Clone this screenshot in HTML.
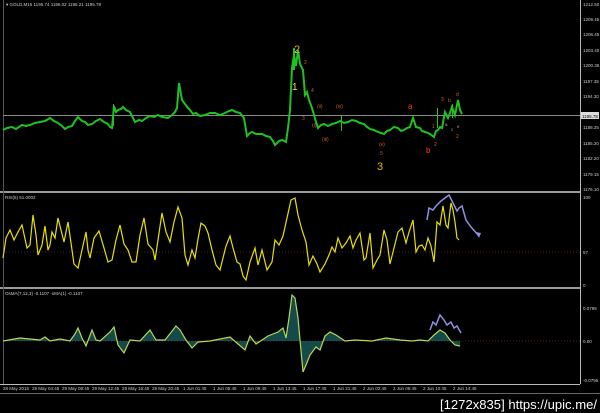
<!DOCTYPE html>
<html><head><style>
body{margin:0;background:#000;width:600px;height:413px;overflow:hidden;font-family:"Liberation Sans",sans-serif}
</style></head><body>
<svg width="600" height="413" xmlns="http://www.w3.org/2000/svg" style="position:absolute;left:0;top:0">
<rect width="600" height="413" fill="#000"/>
<line x1="0" y1="192" x2="580" y2="192" stroke="#9a9a9a" stroke-width="2"/>
<line x1="0" y1="288" x2="580" y2="288" stroke="#9a9a9a" stroke-width="2"/>
<line x1="580.5" y1="0" x2="580.5" y2="384" stroke="#bbb" stroke-width="1"/>
<line x1="3.5" y1="0" x2="3.5" y2="384" stroke="#555" stroke-width="1"/>
<line x1="0" y1="384.5" x2="580" y2="384.5" stroke="#bbb" stroke-width="1"/>
<line x1="0" y1="393.5" x2="600" y2="393.5" stroke="#666" stroke-width="1"/>
<line x1="3" y1="115.5" x2="580" y2="115.5" stroke="#8a8a8a" stroke-width="1"/>
<polyline fill="none" stroke="#1fc21f" stroke-width="2" stroke-linejoin="miter" points="3,130 7,128 12,127 16,129 22,125 26,126 30,125 35,123 40,122 45,121 50,118 54,121 58,123 62,126 65,129 68,127 72,126 75,121 78,117 82,121 85,122 88,125 92,124 96,121 100,119 104,122 108,124 110,127 112,128 114,106 116,112 118,110 121,109 123,107 126,110 130,112 133,118 135,122 139,120 142,121 146,118 150,116 154,117 158,115 162,117 168,118 172,115 175,112 177,108 179,83 182,100 185,104 188,108 190,110 193,114 196,113 200,116 205,115 210,113 215,113 220,115 225,113 229,111 232,110 236,112 240,113 244,118 247,136 250,133 252,132 256,134 262,134 266,136 270,137 273,141 275,145 279,141 282,140 286,142 288,128 290,110 292,68 294,55 296,66 298,50 300,64 303,70 305,95 307,92 309,100 312,108 314,115 316,122 318,128 321,125 324,124 328,126 332,124 336,123 340,121 344,123 348,122 352,120 356,121 360,123 364,124 367,127 370,129 374,130 378,132 381,133 384,134 387,131 390,130 394,127 398,128 401,131 404,130 407,128 410,127 413,118 416,127 420,128 422,131 425,132 428,133 430,134 434,137 436,131 438,130 440,127 442,128 445,112 448,118 450,113 452,107 455,115 458,100 460,110 462,114"/>
<g fill="#1fc21f"><rect x="293" y="48" width="2" height="22"/><rect x="437" y="108" width="1" height="20"/><rect x="113" y="104" width="1" height="22"/><rect x="341" y="115" width="1" height="16"/><rect x="452" y="104" width="1" height="14"/></g>
<g font-family="Liberation Sans,sans-serif">
<text x="294" y="53" fill="#e8b400" font-size="11">2</text>
<text x="292" y="90" fill="#f0e040" font-size="10">1</text>
<text x="377" y="170" fill="#e8b400" font-size="11">3</text>
<text x="408" y="109" fill="#ff3b1f" font-size="8">a</text>
<text x="426" y="153" fill="#ff3b1f" font-size="8">b</text>
<g fill="#c8641e" font-size="5">
<text x="304" y="64">2</text><text x="311" y="92">4</text><text x="302" y="120">3</text><text x="317" y="108">(ii)</text><text x="336" y="108">(iv)</text><text x="312" y="127">(i)</text><text x="322" y="141">(iii)</text><text x="379" y="146">(v)</text><text x="380" y="155">5</text><text x="441" y="101">3</text><text x="432" y="128">1</text><text x="434" y="146">2</text><text x="456" y="96">d</text><text x="448" y="102">b</text><text x="456" y="138">2</text>
</g>
<g fill="#aaa" font-size="4.5"><text x="445" y="126">a</text><text x="451" y="131">c</text><text x="457" y="128">e</text></g>
<text x="6" y="6" fill="#ccc" font-size="4.5">▾ GOLD,M15  1195.74 1196.02 1195.21 1195.78</text>
<g fill="#ccc" font-size="4.5">
<text x="583" y="6">1212.50</text><text x="583" y="21">1209.45</text><text x="583" y="36">1206.45</text><text x="583" y="52">1203.40</text><text x="583" y="67">1200.35</text><text x="583" y="83">1197.35</text><text x="583" y="98">1194.30</text><text x="583" y="129">1188.25</text><text x="583" y="145">1185.20</text><text x="583" y="160">1182.20</text><text x="583" y="176">1179.15</text><text x="583" y="191">1176.10</text>
</g>
<rect x="581" y="112" width="18" height="7" fill="#ddd"/><text x="582" y="118" fill="#000" font-size="4.5">1195.78</text>
<text x="5" y="199" fill="#ccc" font-size="4.5">RSI(5) 51.0002</text>
<line x1="3" y1="252" x2="580" y2="252" stroke="#5a1a1a" stroke-dasharray="1,2"/>
<polyline fill="none" stroke="#e8e000" stroke-width="1.2" points="3,258 6,238 10,230 14,240 18,232 22,225 27,248 30,245 33,215 36,235 38,255 42,245 45,226 48,250 50,245 52,232 55,238 58,218 62,234 64,242 68,222 72,250 74,264 78,268 82,250 86,232 88,250 90,258 94,238 99,231 104,248 108,262 112,260 116,240 120,225 124,244 128,250 132,262 136,262 140,235 144,218 148,244 153,250 155,260 158,240 162,213 166,232 170,242 174,222 178,207 182,218 185,255 188,265 192,250 195,258 198,239 201,223 205,226 208,233 212,250 216,265 220,270 226,246 230,236 233,248 237,262 240,264 243,276 246,280 250,262 255,248 258,265 262,250 267,270 272,262 275,240 279,245 283,236 287,218 291,200 295,198 298,215 302,230 306,242 309,265 313,256 317,264 320,272 325,264 329,255 332,247 335,252 338,238 342,248 346,243 350,236 353,248 356,240 360,233 364,260 366,258 370,233 373,268 377,260 380,255 384,230 387,240 390,264 394,248 398,232 402,228 406,243 409,232 413,220 416,252 419,246 422,245 425,250 428,238 431,246 434,262 437,222 440,225 443,206 446,225 448,228 451,203 453,210 455,222 457,238 459,240"/>
<polyline fill="none" stroke="#9090e0" stroke-width="1.5" points="427,220 429,208 433,210 436,206 441,201 449,195 454,205 457,211 459,208 462,206 466,220 471,227 479,236"/>
<polygon points="479,238 476,232 481,233" fill="#9090e0"/>
<g fill="#ccc" font-size="4.5"><text x="583" y="199">100</text><text x="583" y="254">57</text><text x="583" y="287">0</text></g>
<text x="5" y="295" fill="#ccc" font-size="4.5">OsMA(7,12,3) -0.1107  -sMA(1) -0.1107</text>
<line x1="3" y1="341" x2="580" y2="341" stroke="#5a1a1a" stroke-dasharray="1,2"/>
<path d="M3,341 L20,338 40,340 45,337 50,341 60,339 70,341 75,334 78,328 82,338 86,346 92,330 96,340 100,341 110,332 114,327 118,345 124,353 130,340 140,341 150,330 156,340 165,340 176,326 180,330 186,340 192,348 198,342 210,341 230,337 245,350 250,336 256,344 262,340 268,336 278,332 283,328 286,338 289,318 292,295 295,298 298,318 300,340 303,372 306,365 310,355 316,347 320,350 325,336 330,332 336,335 345,341 355,340 372,341 386,338 400,340 412,341 420,340 428,341 434,335 440,330 445,333 450,340 455,345 460,346 L460,341 Z" fill="#1d6a6a" opacity="0.7"/>
<polyline fill="none" stroke="#b8d850" stroke-width="1.2" points="3,341 20,338 40,340 45,337 50,341 60,339 70,341 75,334 78,328 82,338 86,346 92,330 96,340 100,341 110,332 114,327 118,345 124,353 130,340 140,341 150,330 156,340 165,340 176,326 180,330 186,340 192,348 198,342 210,341 230,337 245,350 250,336 256,344 262,340 268,336 278,332 283,328 286,338 289,318 292,295 295,298 298,318 300,340 303,372 306,365 310,355 316,347 320,350 325,336 330,332 336,335 345,341 355,340 372,341 386,338 400,340 412,341 420,340 428,341 434,335 440,330 445,333 450,340 455,345 460,346"/>
<polyline fill="none" stroke="#9090e0" stroke-width="1.5" points="430,330 433,322 436,325 440,315 444,320 447,325 451,322 454,328 457,326 461,333"/>
<g fill="#ccc" font-size="4.5"><text x="583" y="310">0.0795</text><text x="583" y="343">0.00</text><text x="583" y="382">-0.0795</text></g>
<g fill="#ccc" font-size="4.5">
<text x="3" y="390">28 May 2015</text><text x="32" y="390">29 May 04:45</text><text x="62" y="390">29 May 08:45</text><text x="92" y="390">29 May 12:45</text><text x="122" y="390">29 May 16:45</text><text x="152" y="390">29 May 20:45</text><text x="183" y="390">1 Jun 01:45</text><text x="213" y="390">1 Jun 05:45</text><text x="243" y="390">1 Jun 09:45</text><text x="273" y="390">1 Jun 13:45</text><text x="303" y="390">1 Jun 17:45</text><text x="333" y="390">1 Jun 21:45</text><text x="363" y="390">2 Jun 02:45</text><text x="393" y="390">2 Jun 06:45</text><text x="423" y="390">2 Jun 10:45</text><text x="453" y="390">2 Jun 14:45</text>
</g>
<text x="440" y="409" fill="#fff" font-size="13" font-family="Liberation Sans Narrow,Liberation Sans,sans-serif" textLength="157" lengthAdjust="spacingAndGlyphs">[1272x835] https://upic.me/</text>
</g>
</svg>
</body></html>
